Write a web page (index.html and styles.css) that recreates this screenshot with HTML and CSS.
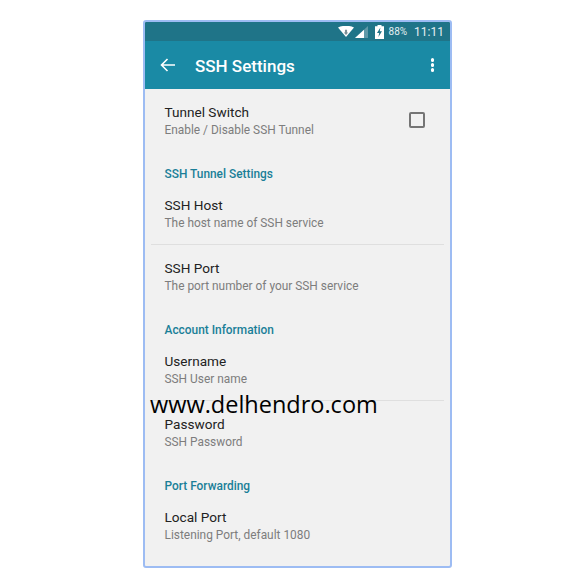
FILE: index.html
```html
<!DOCTYPE html>

<html>
    <head>
        <title>SSH Settings</title>
        <link rel="stylesheet" href="styles.css">
    </head>
    <body>
        <div class="phone">
            <div class="status-bar">
                <svg class="wifi" width="16" height="11" viewBox="0 0 18 12" preserveAspectRatio="none">
                    <path d="M0 1.5 C5 -0.8 13 -0.8 18 1.5 L9 12 Z" fill="#fff"/>
                    <path d="M7.8 4 h2.4 v3 h1.3 L9 9.8 6.5 7 h1.3 Z" fill="#7c8f96"/>
                </svg>
                <svg class="signal" width="13" height="12" viewBox="0 0 13 12">
                    <path d="M0 12 L13 0 V12 Z" fill="#5f99a8"/>
                    <path d="M0 12 L9 3.7 V12 Z" fill="#fff"/>
                </svg>
                <svg class="battery" width="9" height="14" viewBox="0 0 9 14">
                    <path d="M2.5 0 h4 v1.2 H9 V14 H0 V1.2 h2.5 Z" fill="#fff"/>
                    <path d="M5.4 2.5 L2 8 h2.2 L3.4 12 L7 6.2 H4.8 Z" fill="#1f7488"/>
                </svg>
                <span class="percent">88%</span>
                <span class="clock">11:11</span>
            </div>

            <div class="app-bar">
                <svg class="back" width="16" height="14" viewBox="0 0 16 14">
                    <path d="M15 7 H2 M7.5 1 L1.5 7 L7.5 13" fill="none" stroke="#fff" stroke-width="1.6"/>
                </svg>
                <h2>SSH Settings</h2>
                <div class="menu"><i></i><i></i><i></i></div>
            </div>

            <div class="settings">
                <div class="item item-switch">
                    <div>
                        <div class="title">Tunnel Switch</div>
                        <div class="sub">Enable / Disable SSH Tunnel</div>
                    </div>
                    <div class="checkbox"></div>
                </div>

                <div class="section">SSH Tunnel Settings</div>
                <div class="item line">
                    <div class="title">SSH Host</div>
                    <div class="sub">The host name of SSH service</div>
                </div>
                <div class="item after-line">
                    <div class="title">SSH Port</div>
                    <div class="sub">The port number of your SSH service</div>
                </div>

                <div class="section">Account Information</div>
                <div class="item line">
                    <div class="title">Username</div>
                    <div class="sub">SSH User name</div>
                </div>
                <div class="item after-line">
                    <div class="title">Password</div>
                    <div class="sub">SSH Password</div>
                </div>

                <div class="section">Port Forwarding</div>
                <div class="item">
                    <div class="title">Local Port</div>
                    <div class="sub">Listening Port, default 1080</div>
                </div>
            </div>
        </div>

        <div class="watermark">www.delhendro.com</div>
    </body>
</html>
```

FILE: styles.css
```css
body {
  margin: 0;
  padding: 0;
  background: #fff;
  font-family: 'Roboto', Arial, sans-serif;
  position: relative;
  height: 575px;
  overflow: hidden;
}

.phone {
  box-sizing: border-box;
  width: 309px;
  height: 548px;
  margin: 20px 0 0 143px;
  border: 2px solid #9dbcf3;
  border-radius: 3px;
  background: #f1f1f1;
  overflow: hidden;
}

.status-bar {
  height: 19px;
  background: #1f7488;
  display: flex;
  align-items: center;
  justify-content: flex-end;
  padding-right: 6px;
  color: #e4eff2;
}

.wifi {
  margin-right: 1px;
}

.signal {
  margin-right: 7px;
}

.battery {
  margin-right: 5px;
}

.percent {
  font-size: 10px;
  margin-right: 7px;
}

.clock {
  font-size: 12px;
}

.app-bar {
  height: 48px;
  background: #1a8aa5;
  display: flex;
  align-items: center;
  color: #fff;
}

.back {
  margin-left: 15px;
}

.app-bar h2 {
  margin: 2px 0 0 19px;
  font-size: 17px;
  font-weight: 500;
  flex: 1;
}

.menu {
  display: flex;
  flex-direction: column;
  gap: 1.5px;
  margin-right: 16px;
}

.menu i {
  display: block;
  width: 3.5px;
  height: 3.5px;
  border-radius: 50%;
  background: #fff;
}

.settings {
  padding: 0 6px;
}

.item {
  padding: 16px 13.5px 14px;
}

.item-switch {
  display: flex;
  justify-content: space-between;
  align-items: flex-start;
  padding-top: 15px;
}

.after-line {
  padding-top: 15px;
}

.line {
  border-bottom: 1px solid #dfdfdf;
}

.title {
  font-size: 13.6px;
  line-height: 16px;
  color: #222;
}

.sub {
  font-size: 11.9px;
  line-height: 14px;
  margin-top: 3px;
  color: #7d7d7d;
}

.section {
  font-size: 11.9px;
  font-weight: 500;
  line-height: 14px;
  color: #1a7f98;
  padding: 0 13.5px;
  margin-top: 16px;
}

.checkbox {
  box-sizing: border-box;
  width: 16px;
  height: 16px;
  margin: 8px 5.5px 0 0;
  border: 2px solid #757575;
  border-radius: 2px;
}

.watermark {
  position: absolute;
  left: 150px;
  top: 388px;
  font-family: 'Open Sans', Arial, sans-serif;
  font-size: 23.5px;
  line-height: 32px;
  color: #000;
}
```
